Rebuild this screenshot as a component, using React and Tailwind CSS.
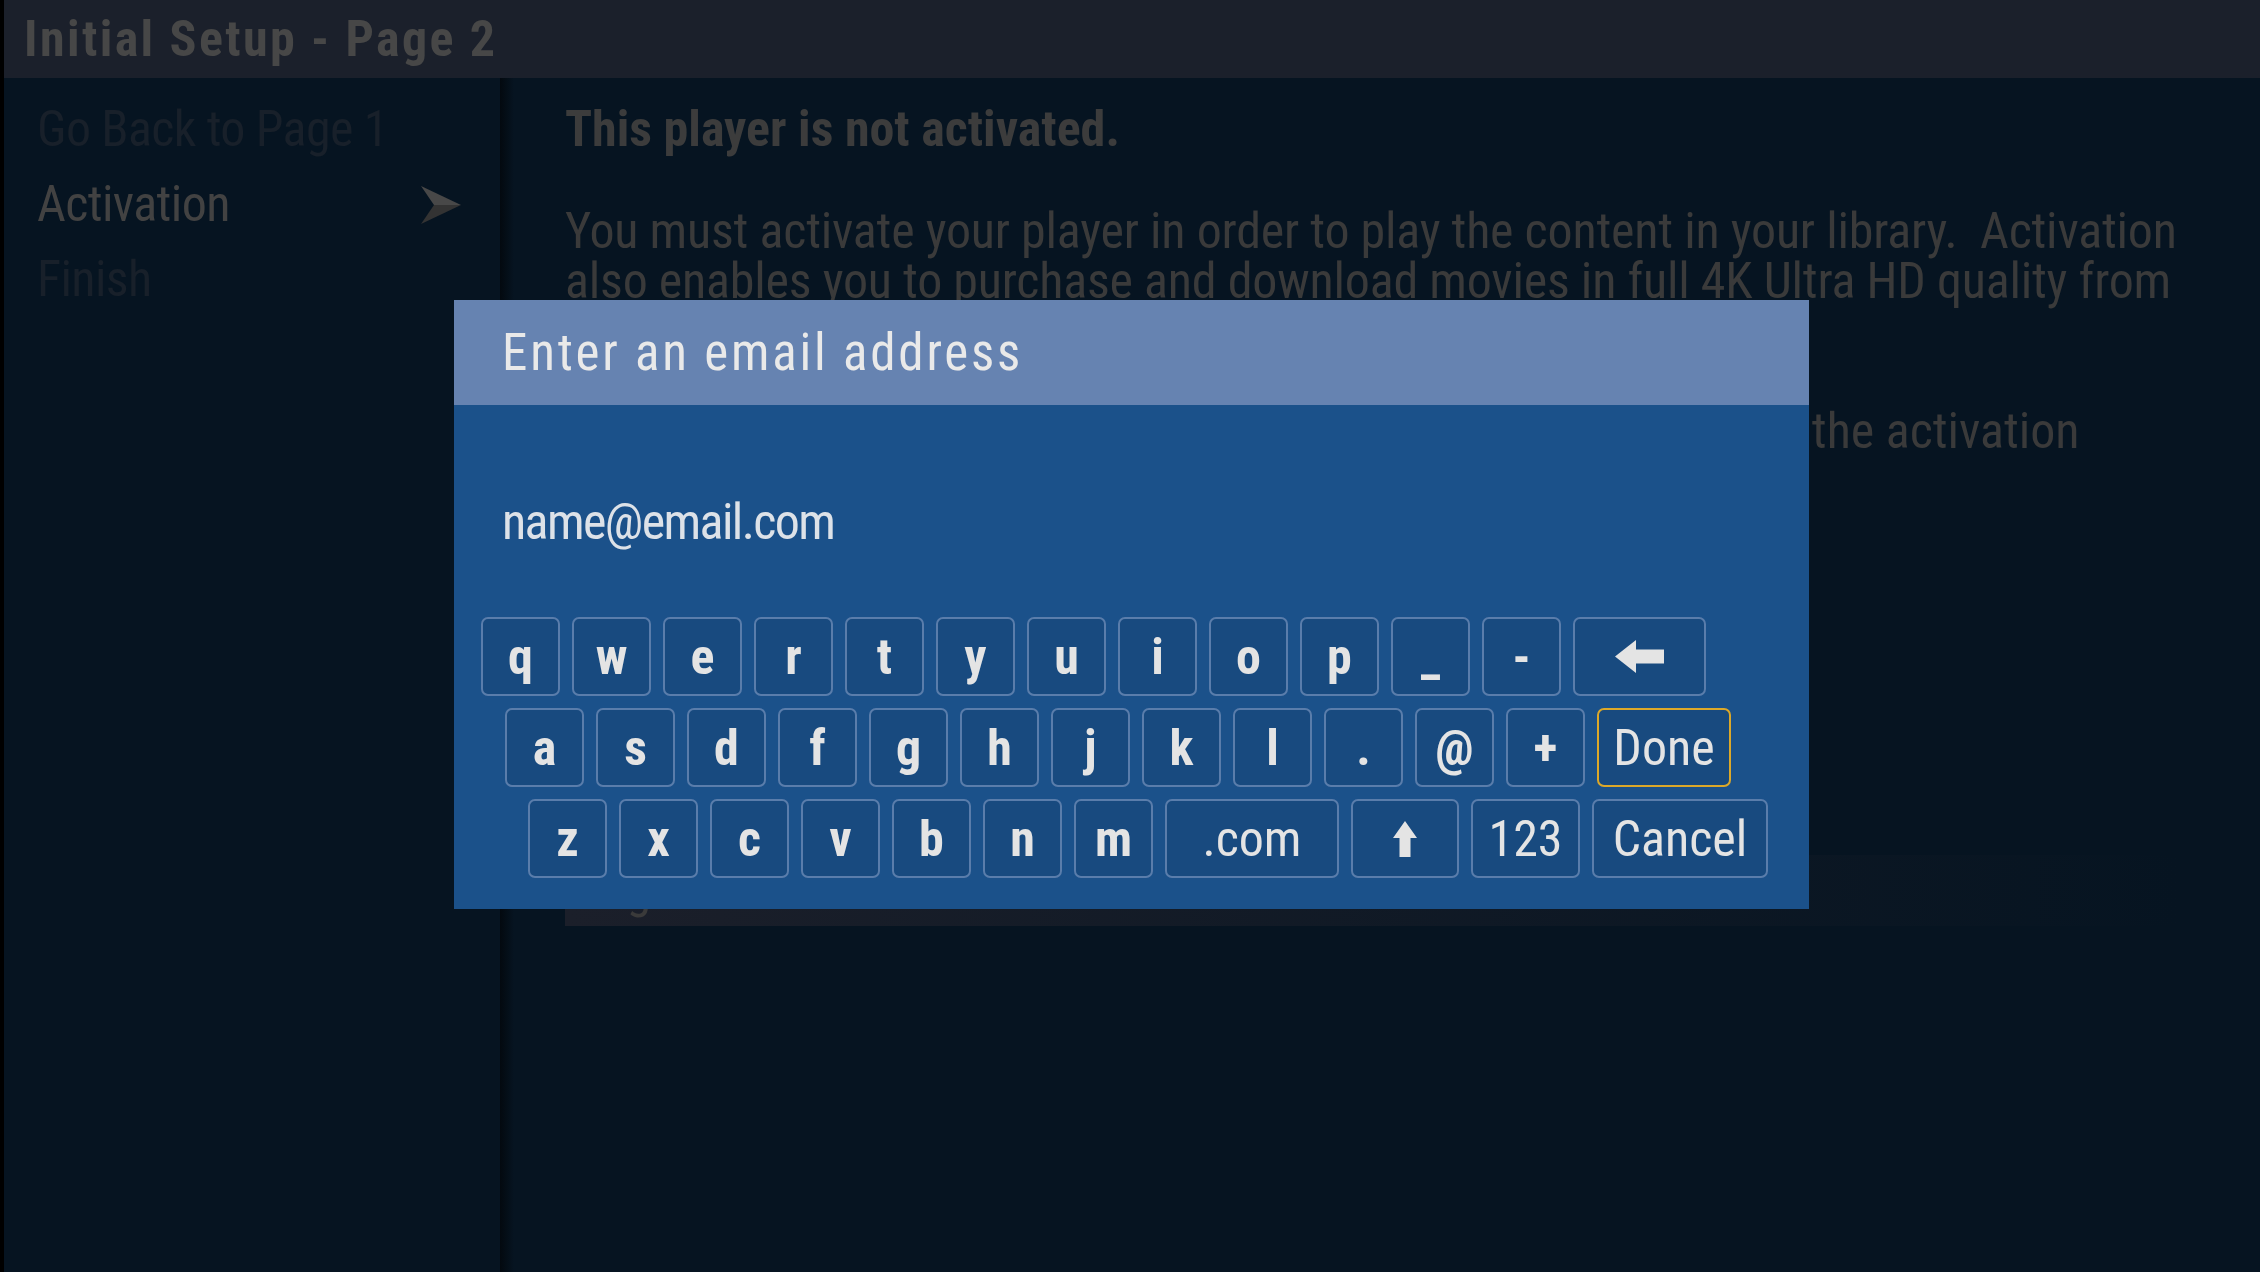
import React from 'react';

const row1 = ['q', 'w', 'e', 'r', 't', 'y', 'u', 'i', 'o', 'p', '_', '-'];
const row2 = ['a', 's', 'd', 'f', 'g', 'h', 'j', 'k', 'l', '.', '@', '+'];
const row3 = ['z', 'x', 'c', 'v', 'b', 'n', 'm'];

const Key = ({ children, width = 'w-[79px]', bold = true, active = false }) => (
  <div
    className={`${width} h-[79px] flex items-center justify-center rounded-[7px] border-2 bg-[#184a7f] text-[#e4e4e4] text-[50px] leading-none ${
      active ? 'border-[#dca829]' : 'border-[#5a7dab]'
    } ${bold ? 'font-bold' : 'font-normal'}`}
  >
    {children}
  </div>
);

const BackArrow = () => (
  <svg width="49" height="33" viewBox="0 0 49 33">
    <path d="M0 16.5 L21 0 L21 9.5 L49 9.5 L49 23.5 L21 23.5 L21 33 Z" fill="#e4e4e4" />
  </svg>
);

const UpArrow = () => (
  <svg width="24" height="36" viewBox="0 0 24 36">
    <path d="M12 0 L24 17 L17.5 17 L17.5 36 L6.5 36 L6.5 17 L0 17 Z" fill="#e4e4e4" />
  </svg>
);

const Chevron = () => (
  <svg width="40" height="38" viewBox="0 0 40 38">
    <path d="M0 0 L40 19 L13 19 Z" fill="#484848" />
    <path d="M13 19 L40 19 L0 38 Z" fill="#333333" />
  </svg>
);

export default function App() {
  return (
    <div className="relative w-[2260px] h-[1272px] overflow-hidden flex bg-black font-['Roboto_Condensed','Liberation_Sans_Narrow','DejaVu_Sans_Condensed',Roboto,sans-serif]">
      {/* left edge strip */}
      <div className="w-[4px] shrink-0 bg-black" />

      <div className="flex-1 flex flex-col bg-[#061421]">
        {/* Header */}
        <div className="h-[78px] shrink-0 bg-[#1b202b] flex items-center pl-[20px]">
          <h1 className="text-[50px] font-bold tracking-[2.4px] text-[#474747] leading-none">Initial Setup - Page 2</h1>
        </div>

        <div className="flex-1 flex">
          {/* Sidebar */}
          <div className="w-[496px] shrink-0 pt-[14px] pl-[33px] pr-[39px] text-[50px] leading-[75px] tracking-[-0.6px]">
            <div className="text-[#18202a]">Go Back to Page 1</div>
            <div className="flex items-center justify-between text-[#424242]">
              <span>Activation</span>
              <Chevron />
            </div>
            <div className="text-[#18202a]">Finish</div>
          </div>
          <div className="w-[14px] shrink-0 bg-linear-to-r from-[#03090f] to-[#061421]" />

          {/* Main */}
          <div className="flex-1 pl-[51px] pt-[14px] text-[#3a3a3a]">
            <div className="text-[50px] font-bold leading-[75px] text-[#3c3c3c]">This player is not activated.</div>
            <div className="mt-[39px] text-[50px] leading-[50px] whitespace-pre tracking-[-0.2px]">
              <div>You must activate your player in order to play the content in your library.  Activation</div>
              <div>also enables you to purchase and download movies in full 4K Ultra HD quality from</div>
              <div>the Kaleidescape Store.</div>
            </div>
            <div className="mt-[50px] w-[1485px] text-right text-[50px] leading-[50px] whitespace-nowrap">
              To activate this player, enter your email address below to begin the activation
            </div>
            <div className="mt-[399px] w-[1616px] h-[71px] pl-[25px] bg-linear-to-r from-[#1b1f2a] to-transparent text-[50px] leading-[71px]">
              e.g. Email address
            </div>
          </div>
        </div>
      </div>

      {/* Keyboard dialog */}
      <div className="absolute left-[454px] top-[300px] w-[1355px] h-[609px] flex flex-col bg-[#1b518a]">
        <div className="h-[105px] shrink-0 bg-[#6683b1] pl-[48px] flex items-center">
          <span className="text-[51px] tracking-[2.8px] text-[#e9e9e9] leading-none">Enter an email address</span>
        </div>
        <div className="h-[212px] shrink-0 pl-[48px] pt-[22px] flex items-center">
          <span className="text-[50px] tracking-[-1.6px] text-[#dde2e8] leading-none">name@email.com</span>
        </div>
        <div className="flex flex-col gap-[12px]">
          <div className="flex gap-[12px] pl-[27px]">
            {row1.map((k) => (
              <Key key={k}>{k}</Key>
            ))}
            <Key width="w-[133px]">
              <BackArrow />
            </Key>
          </div>
          <div className="flex gap-[12px] pl-[51px]">
            {row2.map((k) => (
              <Key key={k}>{k}</Key>
            ))}
            <Key width="w-[134px]" bold={false} active>
              Done
            </Key>
          </div>
          <div className="flex gap-[12px] pl-[74px]">
            {row3.map((k) => (
              <Key key={k}>{k}</Key>
            ))}
            <Key width="w-[174px]" bold={false}>.com</Key>
            <Key width="w-[108px]">
              <UpArrow />
            </Key>
            <Key width="w-[109px]" bold={false}>123</Key>
            <Key width="w-[176px]" bold={false}>Cancel</Key>
          </div>
        </div>
      </div>
    </div>
  );
}
